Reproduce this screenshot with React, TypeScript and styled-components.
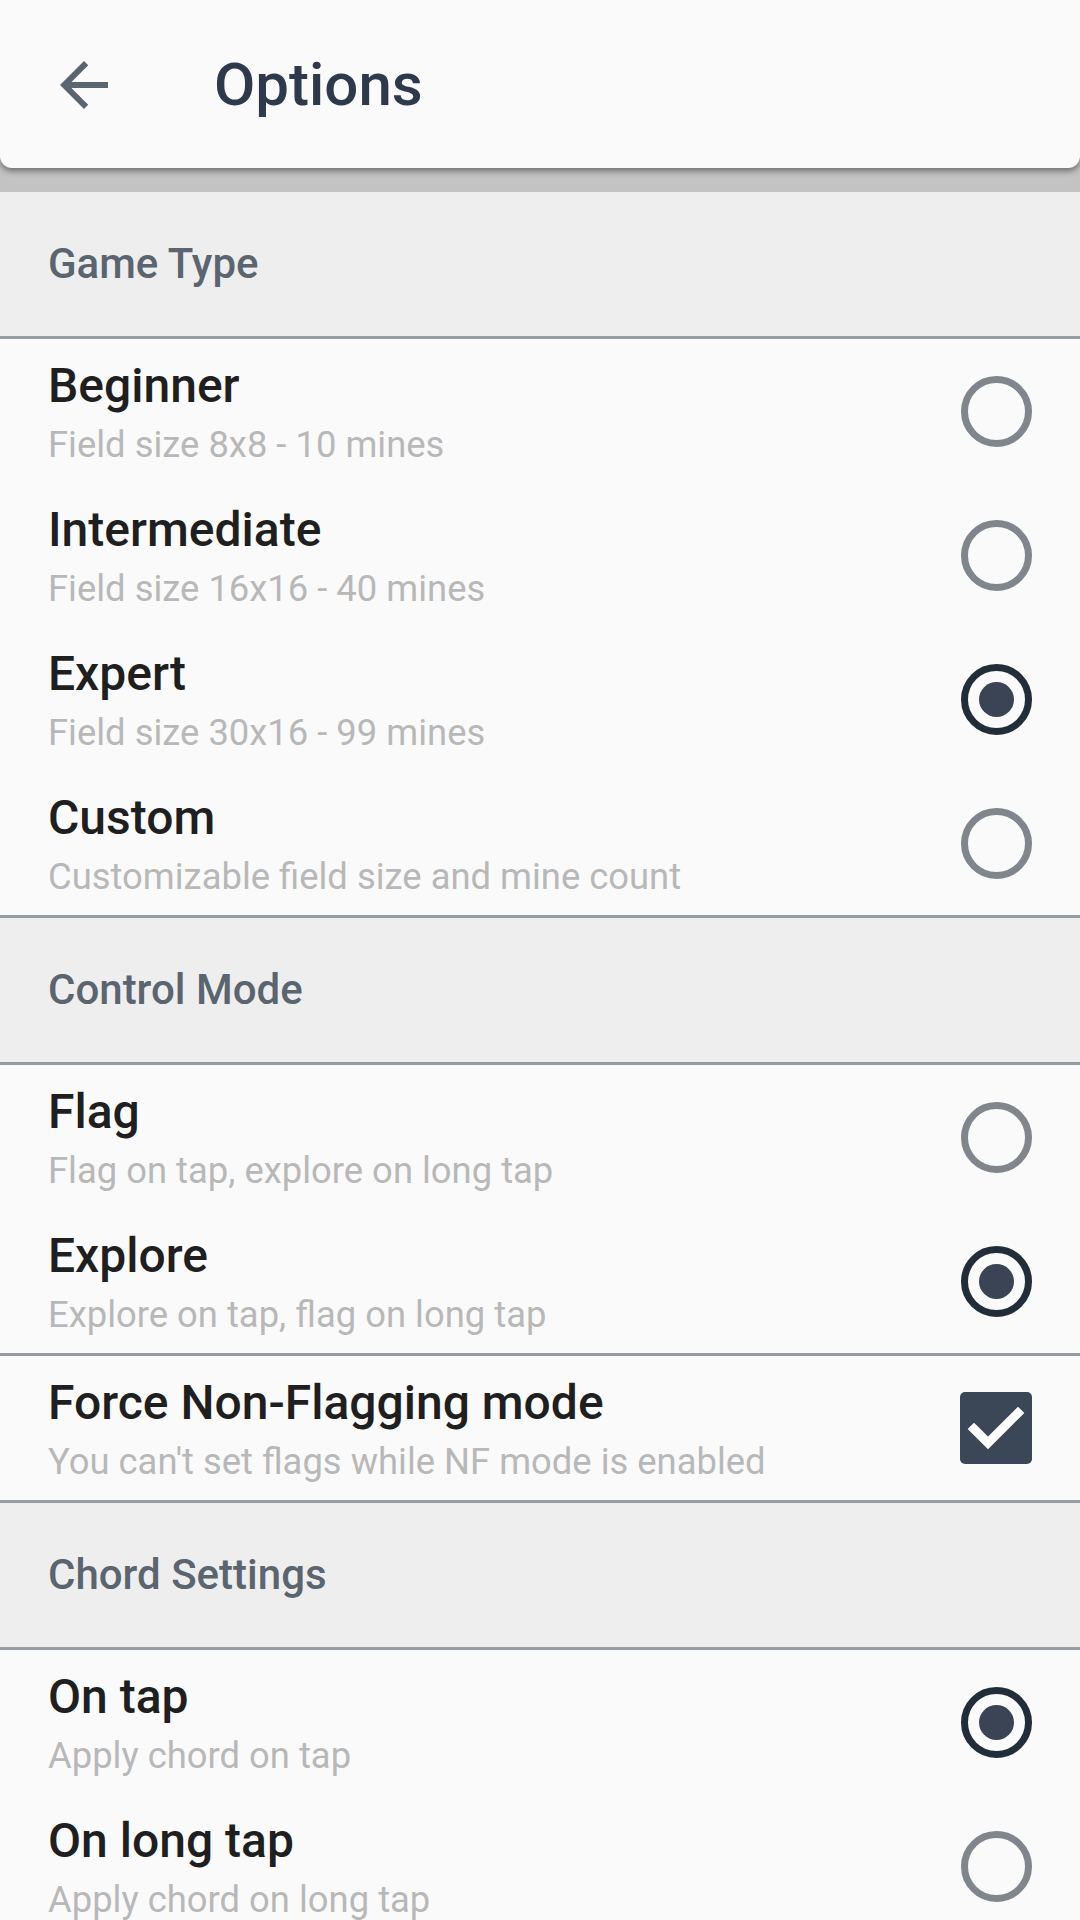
import React from 'react';
import styled, { createGlobalStyle } from 'styled-components';

const GlobalStyle = createGlobalStyle`
  html, body {
    margin: 0;
    padding: 0;
    background: #fafafa;
  }
  body {
    font-family: Roboto, "Noto Sans", "Liberation Sans", sans-serif;
    -webkit-font-smoothing: antialiased;
  }
`;

const Page = styled.div`
  width: 1080px;
  height: 1920px;
  overflow: hidden;
  background: #fafafa;
`;

const TopArea = styled.div`
  background: #c3c3c3;
  padding-bottom: 24px;
`;

const AppBar = styled.header`
  height: 168px;
  box-sizing: border-box;
  padding: 2px 0 0 48px;
  display: flex;
  align-items: center;
  background: #fafafa;
  border-radius: 0 0 12px 12px;
  box-shadow: 0 3px 6px rgba(0, 0, 0, 0.45);
  position: relative;
`;

const BackButton = styled.button`
  width: 72px;
  height: 72px;
  padding: 0;
  border: 0;
  background: none;
  display: flex;
  color: #5b6570;
  cursor: pointer;
`;

const Title = styled.h1`
  margin: 0 0 0 94px;
  font-size: 60px;
  line-height: 70px;
  font-weight: 500;
  color: #2e3a4b;
`;

const SectionHeader = styled.div`
  height: 147px;
  box-sizing: border-box;
  padding-left: 48px;
  display: flex;
  align-items: center;
  background: #eeeeee;
  border-bottom: 3px solid #959ca3;
  font-size: 42px;
  line-height: 44px;
  font-weight: 500;
  color: #5b6570;
`;

const Group = styled.div`
  border-bottom: 3px solid #959ca3;
`;

const Row = styled.label`
  height: 144px;
  box-sizing: border-box;
  padding: 0 48px;
  display: flex;
  align-items: center;
  justify-content: space-between;
  cursor: pointer;
`;

const Texts = styled.div`
  display: flex;
  flex-direction: column;
  min-width: 0;
`;

const ItemTitle = styled.span`
  font-size: 48px;
  line-height: 60px;
  font-weight: 500;
  color: #1f1f1f;
`;

const ItemSub = styled.span`
  margin-top: 7px;
  font-size: 36.4px;
  line-height: 44px;
  color: #b8b8b8;
`;

const Radio = styled.span<{ $checked?: boolean }>`
  width: 71px;
  height: 71px;
  box-sizing: border-box;
  flex-shrink: 0;
  border-radius: 50%;
  border: 7px solid ${p => (p.$checked ? '#222d3a' : '#80868b')};
  display: flex;
  align-items: center;
  justify-content: center;

  &::after {
    content: '';
    display: ${p => (p.$checked ? 'block' : 'none')};
    width: 35px;
    height: 35px;
    border-radius: 50%;
    background: #3a4454;
  }
`;

const CheckBox = styled.span`
  width: 72px;
  height: 72px;
  flex-shrink: 0;
  border-radius: 5px;
  background: #3b4656;
  display: flex;
`;

interface Option {
  title: string;
  sub: string;
  checked?: boolean;
}

const gameTypes: Option[] = [
  { title: 'Beginner', sub: 'Field size 8x8 - 10 mines' },
  { title: 'Intermediate', sub: 'Field size 16x16 - 40 mines' },
  { title: 'Expert', sub: 'Field size 30x16 - 99 mines', checked: true },
  { title: 'Custom', sub: 'Customizable field size and mine count' },
];

const controlModes: Option[] = [
  { title: 'Flag', sub: 'Flag on tap, explore on long tap' },
  { title: 'Explore', sub: 'Explore on tap, flag on long tap', checked: true },
];

const chordModes: Option[] = [
  { title: 'On tap', sub: 'Apply chord on tap', checked: true },
  { title: 'On long tap', sub: 'Apply chord on long tap' },
];

const RadioRow: React.FC<Option> = ({ title, sub, checked }) => (
  <Row>
    <Texts>
      <ItemTitle>{title}</ItemTitle>
      <ItemSub>{sub}</ItemSub>
    </Texts>
    <Radio $checked={checked} />
  </Row>
);

const App: React.FC = () => (
  <Page>
    <GlobalStyle />
    <TopArea>
      <AppBar>
        <BackButton aria-label="Back">
          <svg width="72" height="72" viewBox="0 0 24 24" fill="currentColor">
            <path d="M20 11H7.83l5.59-5.59L12 4l-8 8 8 8 1.41-1.41L7.83 13H20v-2z" />
          </svg>
        </BackButton>
        <Title>Options</Title>
      </AppBar>
    </TopArea>

    <SectionHeader>Game Type</SectionHeader>
    <Group>
      {gameTypes.map(o => (
        <RadioRow key={o.title} {...o} />
      ))}
    </Group>

    <SectionHeader>Control Mode</SectionHeader>
    <Group>
      {controlModes.map(o => (
        <RadioRow key={o.title} {...o} />
      ))}
    </Group>
    <Group>
      <Row>
        <Texts>
          <ItemTitle>Force Non-Flagging mode</ItemTitle>
          <ItemSub>You can't set flags while NF mode is enabled</ItemSub>
        </Texts>
        <CheckBox>
          <svg width="72" height="72" viewBox="0 0 72 72">
            <polyline
              points="14,37 28,51 58,21"
              fill="none"
              stroke="#fff"
              strokeWidth="9"
              strokeLinecap="square"
            />
          </svg>
        </CheckBox>
      </Row>
    </Group>

    <SectionHeader>Chord Settings</SectionHeader>
    {chordModes.map(o => (
      <RadioRow key={o.title} {...o} />
    ))}
  </Page>
);

export default App;
